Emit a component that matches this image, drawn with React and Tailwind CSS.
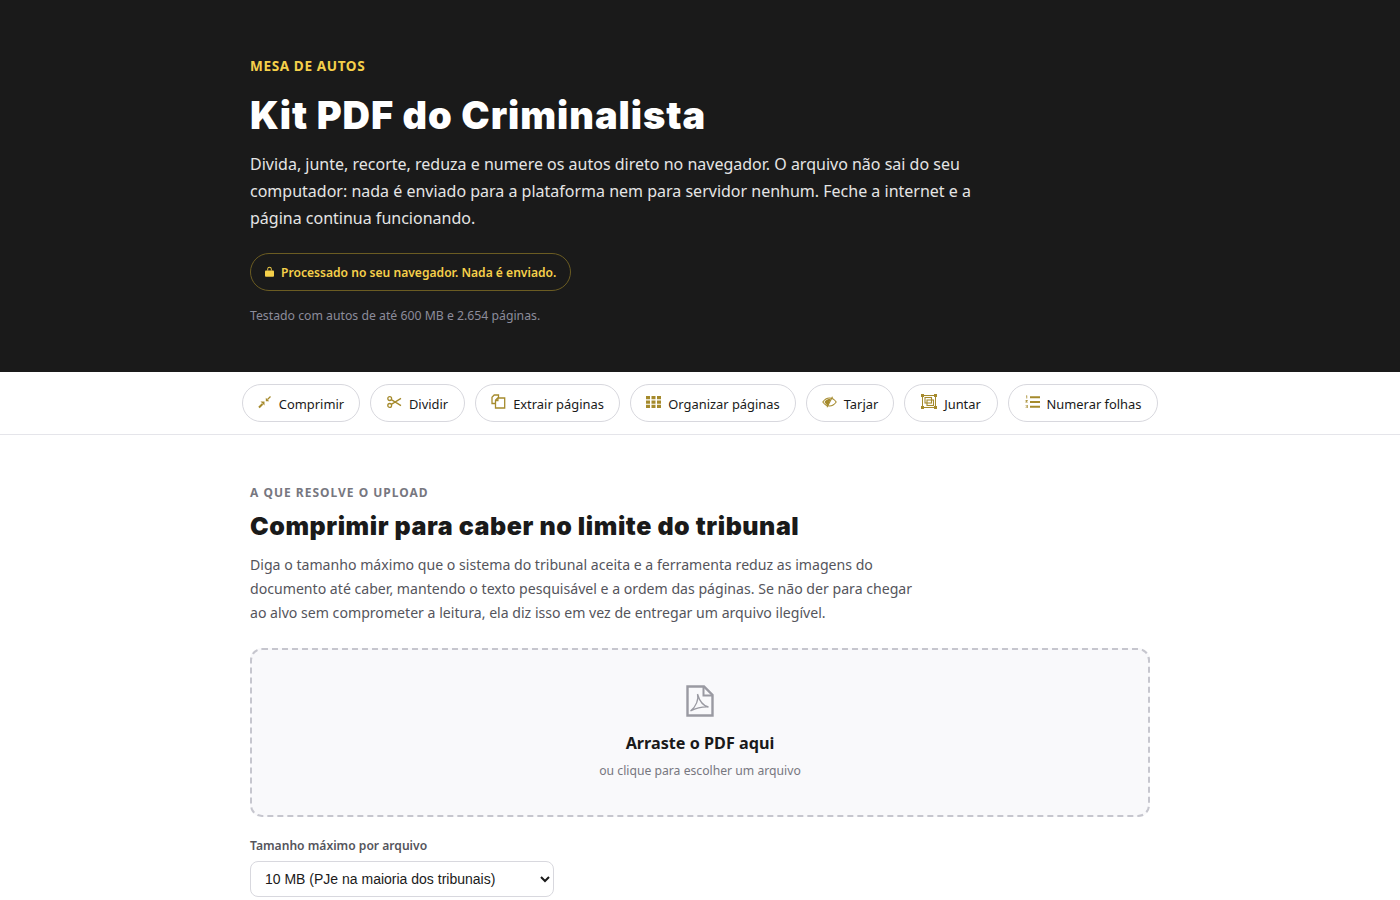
import React from "react";

const Compress = () => (
  <svg viewBox="0 0 14 14" className="h-[14px] w-[14px]" fill="currentColor" stroke="currentColor">
    <path d="M1 12.500 4.500 9" strokeWidth="2" />
    <path d="M2.500 6.500H6.500V10.500Z" stroke="none" />
    <path d="M12.500 1.500 9.500 4.500" strokeWidth="1.300" />
    <path d="M7.800 2.800V6.200H11.200Z" stroke="none" />
  </svg>
);
const Scissors = () => (
  <svg viewBox="0 0 15 12" className="h-[12px] w-[15px]" fill="none" stroke="currentColor" strokeWidth="1.300">
    <circle cx="2.700" cy="2.600" r="1.900" />
    <circle cx="2.700" cy="9.400" r="1.900" />
    <path d="M4.300 3.600 14 9.600M4.300 8.400 14 2.400" />
  </svg>
);
const Pages = () => (
  <svg viewBox="0 0 15 15" className="h-[15px] w-[15px]" fill="none" stroke="currentColor" strokeWidth="1.300">
    <path d="M4.500 9.500H1V3.200L3.200 1h4.300v3" />
    <path d="M4.500 6.200 6.700 4h7v10h-9.200Z" />
    <path d="M4.500 6.500h2.400V4" />
  </svg>
);
const Grid = () => (
  <svg viewBox="0 0 15 12" className="h-[12px] w-[15px]" fill="currentColor">
    <path d="M0 0h4v3.300H0zM5.500 0h4v3.300h-4zM11 0h4v3.300h-4zM0 4.400h4v3.300H0zM5.500 4.400h4v3.300h-4zM11 4.400h4v3.300h-4zM0 8.700h4V12H0zM5.500 8.700h4V12h-4zM11 8.700h4V12h-4z" />
  </svg>
);
const Redact = () => (
  <svg viewBox="0 0 15 12" className="h-[12px] w-[15px]">
    <path d="M.8 6C2.600 3.400 5 2 7.500 2s4.900 1.400 6.700 4c-1.800 2.600-4.200 4-6.700 4S2.600 8.600.8 6Z" fill="none" stroke="currentColor" strokeWidth="1.100" />
    <path d="M2.500 6c1-1.900 3-3.300 6.300-3.300L6 9.500C4.300 8.800 3.300 7.500 2.500 6Z" fill="currentColor" />
    <path d="M10.500.8 5 11.200" stroke="currentColor" strokeWidth="1.100" />
  </svg>
);
const Merge = () => (
  <svg viewBox="0 0 16 15" className="h-[15px] w-[16px]" fill="none" stroke="currentColor">
    <rect x="1.500" y="1.500" width="13" height="12" strokeWidth="1" />
    <rect x="4" y="3.500" width="6.500" height="5.500" strokeWidth="1.100" />
    <rect x="6" y="6" width="6.500" height="5.500" strokeWidth="1.100" />
    <g fill="currentColor" stroke="none">
      <rect width="3" height="3" /><rect x="13" width="3" height="3" /><rect y="12" width="3" height="3" /><rect x="13" y="12" width="3" height="3" />
    </g>
  </svg>
);
const Numbered = () => (
  <svg viewBox="0 0 15 14" className="h-[14px] w-[15px]" fill="currentColor">
    <path d="M5 1.300h10v2H5zM5 6h10v2H5zM5 10.700h10v2H5z" />
    <path d="M1 .5h1.200v3H1.400V1.300H1zM.5 5h2.200v.8l-1.200 1h1.200v.7H.4v-.7l1.300-1.100H.5zM.5 10h2.200v3H.5v-.6h1.500v-.6H.9v-.5h1.100v-.7H.5z" />
  </svg>
);
const Lock = () => (
  <svg viewBox="0 0 10 12" className="h-[11px] w-[9px]" fill="currentColor">
    <path d="M2.500 5V3.300a2.500 2.500 0 0 1 5 0V5h-1V3.300a1.500 1.500 0 0 0-3 0V5Z" />
    <rect y="4.800" width="10" height="7" rx="1" />
  </svg>
);
const PdfFile = () => (
  <svg viewBox="0 0 28 32" className="h-[32px] w-[28px]" fill="none" stroke="currentColor">
    <path d="M1.500 1.500H18L26.500 10v20.500h-25Z" strokeWidth="2.400" />
    <path d="M17.500 1.500V10.500H26.500" strokeWidth="2" />
    <path d="M11.500 9c1.500 5-1.500 13-7 17 5-2.500 10-4.500 18-4-5-1-9-6-11-13Z" strokeWidth="1.300" />
  </svg>
);

const tabs = [
  { label: "Comprimir", Icon: Compress, w: "w-[118px]" },
  { label: "Dividir", Icon: Scissors, w: "w-[95px]" },
  { label: "Extrair páginas", Icon: Pages, w: "w-[145px]" },
  { label: "Organizar páginas", Icon: Grid, w: "w-[166px]" },
  { label: "Tarjar", Icon: Redact, w: "w-[88px]" },
  { label: "Juntar", Icon: Merge, w: "w-[94px]" },
  { label: "Numerar folhas", Icon: Numbered, w: "w-[150px]" },
];

export default function App() {
  return (
    <div className="h-[900px] overflow-hidden bg-white font-['Noto_Sans',sans-serif]">
      <header className="h-[372px] bg-[#1a1a1a] pt-[56px]">
        <div className="mx-auto w-[900px]">
          <p className="text-[13.6px] leading-[20px] font-bold tracking-[0.6px] text-[#f5d04a]">MESA DE AUTOS</p>
          <h1 className="mt-[14px] font-['Inter',sans-serif] text-[38px] leading-[50px] font-black tracking-[0.95px] text-white">Kit PDF do Criminalista</h1>
          <p className="mt-[11px] w-[725px] text-[16px] leading-[27px] text-[#e5e5e5]">
            Divida, junte, recorte, reduza e numere os autos direto no navegador. O arquivo não sai do seu computador: nada é enviado para a plataforma nem para servidor nenhum. Feche a internet e a página continua funcionando.
          </p>
          <div className="mt-[21px] inline-flex h-[38px] items-center gap-[7px] rounded-full border border-[#6b5c22] px-[14px] text-[12.1px] font-semibold text-[#f5d04a]">
            <span className="-translate-y-[1px]"><Lock /></span>
            <span className="translate-y-[1px]">Processado no seu navegador. Nada é enviado.</span>
          </div>
          <p className="mt-[16px] text-[12.25px] leading-[18px] text-[#8c8c9a]">Testado com autos de até 600 MB e 2.654 páginas.</p>
        </div>
      </header>
      <nav className="flex h-[63px] items-center justify-center gap-[10px] border-b border-[#e5e5ea] pb-[1px]">
        {tabs.map(({ label, Icon, w }) => (
          <button key={label} className={`flex h-[38px] items-center justify-center gap-[7px] rounded-full border border-[#d8d8de] bg-white text-[12.9px] text-[#1a1a1a] ${w}`}>
            <span className="-translate-y-[1px] text-[#a58a2c]"><Icon /></span>
            <span className="translate-y-[2px]">{label}</span>
          </button>
        ))}
      </nav>
      <main className="mx-auto w-[900px] pt-[49px]">
        <p className="text-[12px] leading-[18px] font-bold tracking-[1px] text-[#77777f]">A QUE RESOLVE O UPLOAD</p>
        <h2 className="mt-[8px] font-['Inter',sans-serif] text-[25px] leading-[32px] font-black tracking-[0.55px] text-[#1a1a1a]">Comprimir para caber no limite do tribunal</h2>
        <p className="mt-[11px] w-[670px] text-[14.12px] leading-[24px] text-[#55555c]">
          Diga o tamanho máximo que o sistema do tribunal aceita e a ferramenta reduz as imagens do documento até caber, mantendo o texto pesquisável e a ordem das páginas. Se não der para chegar ao alvo sem comprometer a leitura, ela diz isso em vez de entregar um arquivo ilegível.
        </p>
        <div className="mt-[23px] flex h-[169px] flex-col items-center rounded-[12px] border-2 border-dashed border-[#c6c6ce] bg-[#f9f9fb] pt-[35px] text-[#9a9aa2]">
          <PdfFile />
          <p className="mt-[14px] text-[16.2px] leading-[24px] font-bold text-[#1a1a1a]">Arraste o PDF aqui</p>
          <p className="mt-[7px] text-[12.2px] leading-[18px] text-[#77777f]">ou clique para escolher um arquivo</p>
        </div>
        <p className="mt-[20px] text-[12.1px] leading-[18px] font-semibold text-[#55555c]">Tamanho máximo por arquivo</p>
        <select className="mt-[6px] h-[36px] w-[304px] rounded-[8px] border border-[#d8d8de] bg-white pl-[10px] font-['Liberation_Sans',sans-serif] text-[14px] text-[#1a1a1a]">
          <option>10 MB (PJe na maioria dos tribunais)</option>
        </select>
      </main>
    </div>
  );
}
